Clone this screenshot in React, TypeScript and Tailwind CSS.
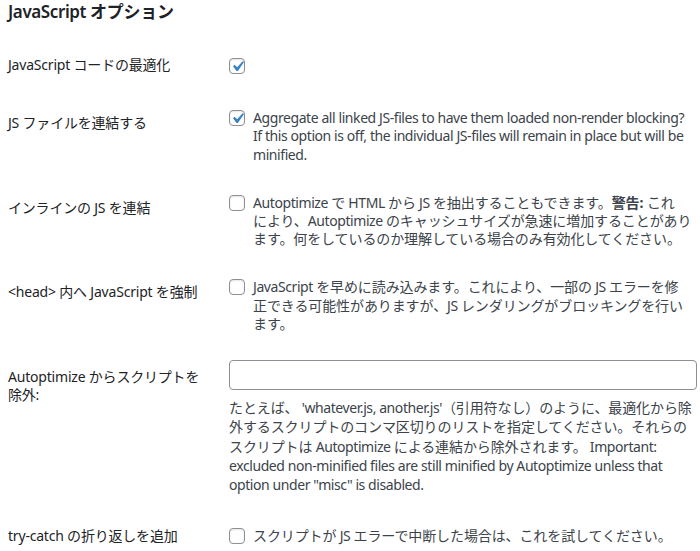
import React from "react";

const FONT = { fontFamily: '"Noto Sans", "Noto Sans CJK JP", sans-serif' };

// Latin runs are drawn a little tighter than the CJK runs.
function L(s: string): React.ReactNode {
  return s.split(/([\u0020-\u024F]+)/).map((part, i) =>
    /[A-Za-z0-9]/.test(part) ? (
      <span key={i} className="tracking-[-0.42px]">
        {part}
      </span>
    ) : (
      <React.Fragment key={i}>{part}</React.Fragment>
    )
  );
}

function Checkbox({ checked }: { checked?: boolean }) {
  return (
    <span className="relative block w-4 h-4 shrink-0 rounded-[4px] border border-[#8c8f94] bg-white shadow-[inset_0_1px_2px_rgba(0,0,0,0.1)]">
      {checked && (
        <svg
          viewBox="0 0 20 20"
          className="absolute -top-[3px] -left-[3px] w-[21px] h-[21px]"
        >
          <path
            d="M14.83 4.89l1.34.94-5.81 8.38H9.02L5.78 9.67l1.34-1.25 2.57 2.4z"
            fill="#3582c4"
          />
        </svg>
      )}
    </span>
  );
}

function Lines({ lines }: { lines: React.ReactNode[] }) {
  return (
    <div className="flex flex-col">
      {lines.map((l, i) => (
        <span key={i} className="block whitespace-nowrap leading-[18.2px]">
          {typeof l === "string" ? L(l) : l}
        </span>
      ))}
    </div>
  );
}

function Label({ children }: { children: React.ReactNode }) {
  return (
    <div className="w-[221px] shrink-0 pt-5 pb-5 pr-2 leading-[18.2px] text-[#1d2327] tracking-[-0.2px]">
      {children}
    </div>
  );
}

function CheckRow({
  label,
  checked,
  lines,
}: {
  label: React.ReactNode;
  checked?: boolean;
  lines?: React.ReactNode[];
}) {
  return (
    <div className="flex">
      <Label>{label}</Label>
      <div className="flex-1 py-[15px] flex items-center">
        <div className="flex items-start gap-2">
          <div className="pt-[1px]">
            <Checkbox checked={checked} />
          </div>
          {lines && <Lines lines={lines} />}
        </div>
      </div>
    </div>
  );
}

export default function App() {
  return (
    <div
      className="min-h-[551px] w-[700px] bg-white pl-2 text-[14px] text-[#3c434a] tracking-[-0.1px] overflow-hidden"
      style={FONT}
    >
      <h2 className="text-[17px] leading-[23px] font-semibold text-[#1d2327] mb-[13px]">
        <span className="tracking-[-0.4px]">JavaScript </span>
        <span className="tracking-[-0.3px]">オプション</span>
      </h2>

      <CheckRow label="JavaScript コードの最適化" checked />

      <CheckRow
        label="JS ファイルを連結する"
        checked
        lines={[
          "Aggregate all linked JS-files to have them loaded non-render blocking?",
          "If this option is off, the individual JS-files will remain in place but will be",
          "minified.",
        ]}
      />

      <CheckRow
        label="インラインの JS を連結"
        lines={[
          <>
            {L("Autoptimize で HTML から JS を抽出することもできます。")}
            <strong className="font-bold">警告:</strong>
            {L(" これ")}
          </>,
          "により、Autoptimize のキャッシュサイズが急速に増加することがあり",
          "ます。何をしているのか理解している場合のみ有効化してください。",
        ]}
      />

      <CheckRow
        label="<head> 内へ JavaScript を強制"
        lines={[
          "JavaScript を早めに読み込みます。これにより、一部の JS エラーを修",
          "正できる可能性がありますが、JS レンダリングがブロッキングを行い",
          "ます。",
        ]}
      />

      <div className="flex">
        <Label>
          <span className="block whitespace-nowrap">Autoptimize からスクリプトを</span>
          <span className="block">除外:</span>
        </Label>
        <div className="flex-1 pt-3 pb-[13px] pr-[3px]">
          <div className="h-[30px] w-[468px] rounded-[4px] border border-[#8c8f94] bg-white" />
          <div className="mt-[8px] flex flex-col leading-[19.25px]">
            <span className="block whitespace-nowrap">
              {L("たとえば、 'whatever.js, another.js'（引用符なし）のように、最適化から除")}
            </span>
            <span className="block whitespace-nowrap">
              {L("外するスクリプトのコンマ区切りのリストを指定してください。それらの")}
            </span>
            <span className="block whitespace-nowrap">
              {L("スクリプトは Autoptimize による連結から除外されます。 Important:")}
            </span>
            <span className="block whitespace-nowrap">
              {L("excluded non-minified files are still minified by Autoptimize unless that")}
            </span>
            <span className="block whitespace-nowrap">
              {L('option under "misc" is disabled.')}
            </span>
          </div>
        </div>
      </div>

      <CheckRow
        label="try-catch の折り返しを追加"
        lines={["スクリプトが JS エラーで中断した場合は、これを試してください。"]}
      />
    </div>
  );
}
